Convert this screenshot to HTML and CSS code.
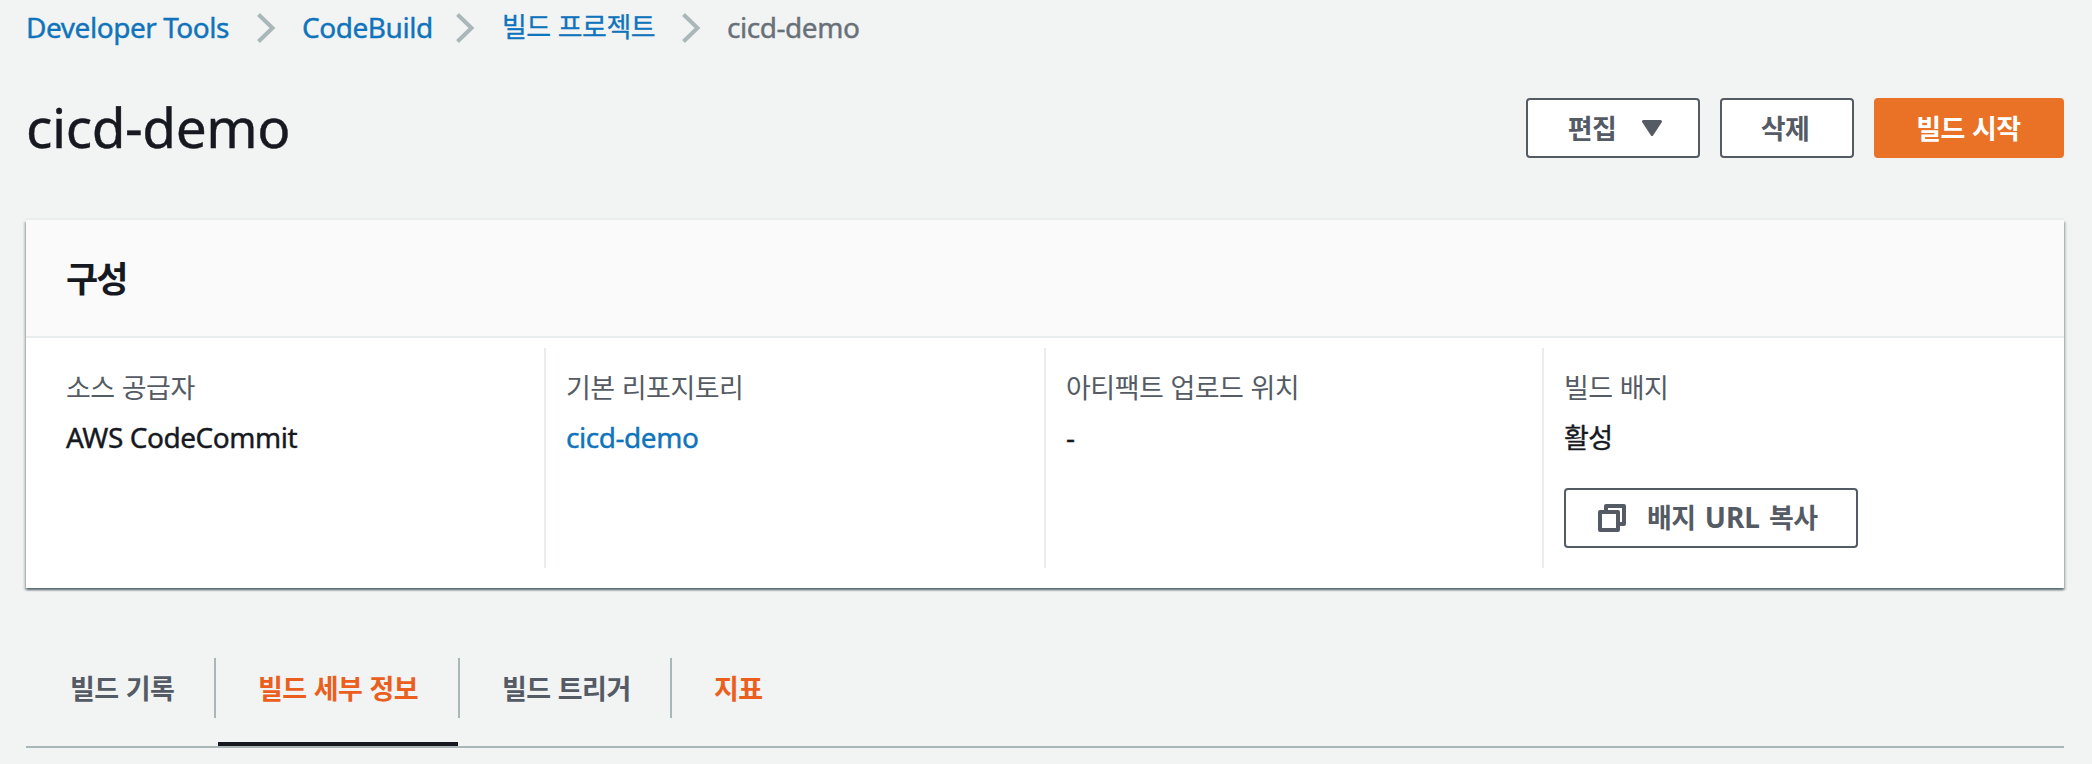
FILE: index.html
```html
<!DOCTYPE html>
<html lang="ko">
<head>
<meta charset="utf-8">
<title>cicd-demo</title>
<link rel="stylesheet" href="styles.css">
</head>
<body>
<nav class="breadcrumbs">
  <a class="crumb crumb-tools" href="#">Developer Tools</a>
  <svg class="chevron" viewBox="0 0 18 30"><path d="M1.5 1.5 15.5 15 1.5 28.5"/></svg>
  <a class="crumb crumb-service" href="#">CodeBuild</a>
  <svg class="chevron" viewBox="0 0 18 30"><path d="M1.5 1.5 15.5 15 1.5 28.5"/></svg>
  <a class="crumb crumb-projects ko" href="#">빌드 프로젝트</a>
  <svg class="chevron" viewBox="0 0 18 30"><path d="M1.5 1.5 15.5 15 1.5 28.5"/></svg>
  <span class="crumb crumb-current">cicd-demo</span>
</nav>
<header class="page-header">
  <h1 class="page-title">cicd-demo</h1>
  <div class="actions">
    <button class="button button-edit"><span class="ko">편집</span><svg class="caret" viewBox="0 0 20 16"><path d="M1.5 1.5h17L10 14.5z"/></svg></button>
    <button class="button button-delete"><span class="ko">삭제</span></button>
    <button class="button button-primary"><span class="ko">빌드 시작</span></button>
  </div>
</header>
<section class="card">
  <h2 class="card-title">구성</h2>
  <div class="columns">
    <div class="column">
      <div class="label"><span class="ko">소스 공급자</span></div>
      <div class="value">AWS CodeCommit</div>
    </div>
    <div class="column">
      <div class="label"><span class="ko">기본 리포지토리</span></div>
      <div class="value"><a class="link" href="#">cicd-demo</a></div>
    </div>
    <div class="column">
      <div class="label"><span class="ko">아티팩트 업로드 위치</span></div>
      <div class="value">-</div>
    </div>
    <div class="column">
      <div class="label"><span class="ko">빌드 배지</span></div>
      <div class="value"><span class="ko">활성</span></div>
      <button class="button button-copy"><svg class="copy-icon" viewBox="0 0 28 28"><path d="M8 6V2h18v18h-4M2 8h18v18H2z"/></svg><span class="ko">배지 <span class="latin">URL</span> 복사</span></button>
    </div>
  </div>
</section>
<div class="tabs">
  <a class="tab tab-history" href="#"><span class="ko">빌드 기록</span></a>
  <a class="tab tab-details" href="#"><span class="ko">빌드 세부 정보</span></a>
  <a class="tab tab-triggers" href="#"><span class="ko">빌드 트리거</span></a>
  <a class="tab tab-metrics" href="#"><span class="ko">지표</span></a>
</div>
</body>
</html>
```
FILE: styles.css
```css
* { box-sizing: border-box; }
body {
  margin: 0;
  height: 764px;
  padding: 0 28px 0 26px;
  overflow: hidden;
  background: #f2f3f3;
  color: #16191f;
  font: 28px/40px "Noto Sans", "Noto Sans CJK KR", sans-serif;
  letter-spacing: -0.45px;
}
a { color: #0f74bb; text-decoration: none; }
.ko { font-family: "Noto Sans CJK KR", sans-serif; font-size: 27px; line-height: 1; letter-spacing: -0.5px; }

.breadcrumbs { display: flex; align-items: center; height: 56px; white-space: nowrap; }
.crumb { flex: none; padding-bottom: 2px; line-height: 40px; }
.crumb-tools, .crumb-service, .crumb-current, .value, .page-title { -webkit-text-stroke: 0.4px currentColor; }
.crumb-tools { width: 231px; }
.crumb-service { width: 154px; margin-left: 27px; }
.crumb-projects { width: 180px; margin-left: 28px; padding-bottom: 4px; -webkit-text-stroke: 0.3px currentColor; }
.crumb-current { margin-left: 27px; color: #687078; }
.chevron { flex: none; width: 18px; height: 30px; fill: none; stroke: #aab7b8; stroke-width: 4; overflow: visible; }

.page-header { display: flex; justify-content: space-between; height: 164px; padding-top: 42px; }
.page-title { margin: 0; font-size: 55px; line-height: 58px; font-weight: 400; }
.actions { display: flex; gap: 20px; }
.button {
  display: flex; align-items: center; justify-content: center;
  height: 60px; padding: 0 0 2px; border: 2px solid #545b64; border-radius: 4px;
  background: #fff; color: #545b64;
  font: 700 28px/40px "Noto Sans", "Noto Sans CJK KR", sans-serif;
}
.button-edit { width: 174px; gap: 26px; padding-left: 4px; }
.caret { width: 20px; height: 16px; margin-top: 2px; fill: #545b64; stroke: #545b64; stroke-width: 3; stroke-linejoin: round; }
.button-delete { width: 134px; padding-right: 4px; }
.button-primary { width: 190px; padding-right: 1px; border-color: #e97226; background: #e97226; color: #fff; }

.card {
  height: 368px; background: #fff;
  box-shadow: 0 2px 2px 0 rgba(0,28,36,.5), 2px 2px 2px 0 rgba(0,28,36,.15), -2px 2px 2px 0 rgba(0,28,36,.15), 0 -2px 0 0 #eaeded;
}
.card-title {
  margin: 0; height: 118px; padding: 37px 40px; border-bottom: 2px solid #eaeded; background: #fafafa;
  font: 700 35px/40px "Noto Sans CJK KR", sans-serif; letter-spacing: -2px;
}
.columns { display: flex; padding-top: 10px; }
.column { width: 500px; height: 220px; padding: 19px 20px 0; border-left: 2px solid #eaeded; }
.column:first-child { width: 518px; padding-left: 40px; border-left: 0; }
.column:nth-child(3) { width: 498px; }
.label { height: 50px; color: #545b64; }
.value { height: 71px; }
.button-copy { width: 294px; justify-content: flex-start; gap: 21px; padding-left: 32px; }
.button-copy .ko { word-spacing: 2px; letter-spacing: -0.5px; }
.latin { font-family: "Noto Sans", sans-serif; font-size: 28px; letter-spacing: 0; }
.copy-icon { width: 28px; height: 28px; margin-top: 2px; fill: none; stroke: #545b64; stroke-width: 4; stroke-linejoin: round; }

.tabs { display: flex; margin-top: 70px; height: 90px; border-bottom: 2px solid #aab7b8; font-weight: 700; }
.tab { position: relative; flex: none; height: 60px; padding: 10px 0 0 42px; border-right: 2px solid #aab7b8; color: #545b64; }
.tab-history { width: 190px; padding-left: 44px; }
.tab-details { width: 244px; color: #eb5f1e; }
.tab-details::after { content: ""; position: absolute; left: 2px; right: 0; top: 84px; height: 4px; background: #16191f; }
.tab-triggers { width: 212px; }
.tab-metrics { border: 0; color: #eb5f1e; }
```
